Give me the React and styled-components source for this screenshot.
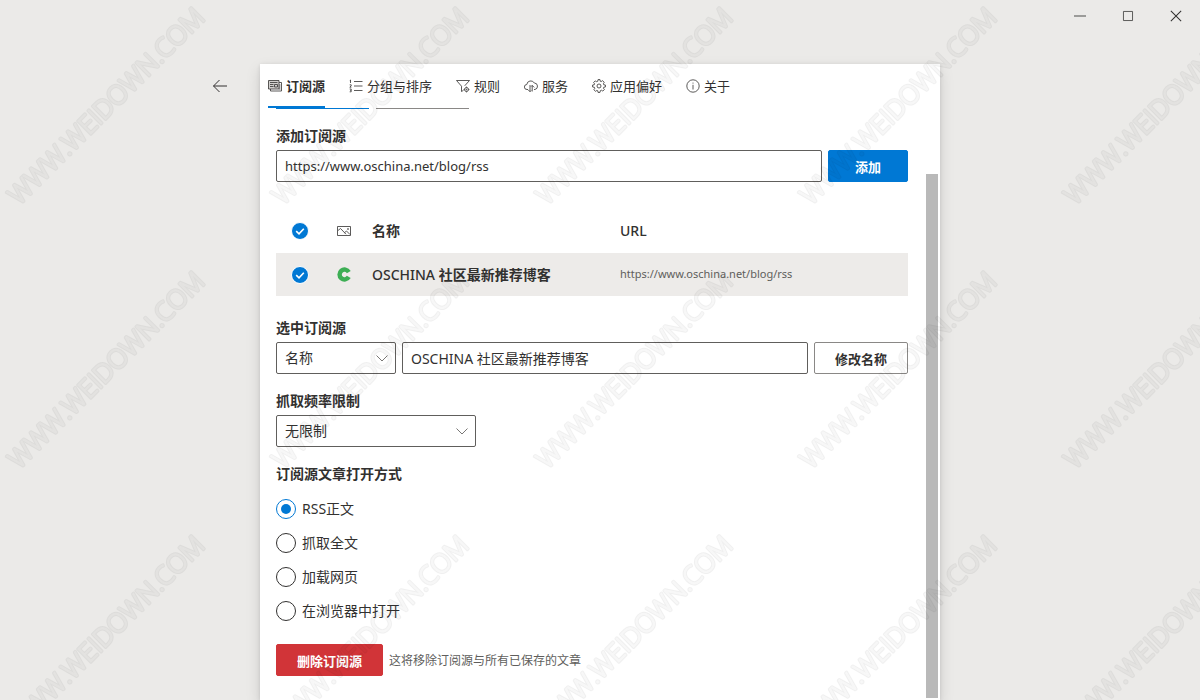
import React, { useState } from "react";
import styled, { createGlobalStyle } from "styled-components";

const GlobalStyle = createGlobalStyle`
  * {
    box-sizing: border-box;
  }

  body {
    margin: 0;
    background: #ebeae8;
    color: #323130;
  }

  body,
  button,
  input,
  select {
    font-family: "Noto Sans", "Noto Sans CJK SC", sans-serif;
    font-size: 14px;
  }
`;

const Page = styled.div`
  display: flex;
  flex-direction: column;
  min-height: 100vh;
`;

const TitleBar = styled.header`
  display: flex;
  justify-content: flex-end;
  height: 32px;
  margin-bottom: 32px;
`;

const WindowButton = styled.button`
  display: flex;
  justify-content: center;
  align-items: center;
  width: 48px;
  padding: 0;
  border: none;
  background: transparent;
  color: #323130;
`;

const Stage = styled.div`
  flex: 1;
  display: grid;
  grid-template-columns: 1fr minmax(0, 680px) 1fr;
`;

const BackButton = styled.button`
  display: flex;
  justify-content: center;
  align-items: center;
  justify-self: end;
  width: 40px;
  height: 44px;
  margin-right: 20px;
  padding: 0;
  border: none;
  background: transparent;
  color: #323130;
`;

const Panel = styled.main`
  display: flex;
  flex-direction: column;
  background: #fff;
  box-shadow: 0 6px 14px 0 rgba(0, 0, 0, 0.13), 0 1px 4px 0 rgba(0, 0, 0, 0.11);
`;

const Tabs = styled.nav`
  display: flex;
  gap: 24px;
  height: 44px;
  padding: 0 8px;
`;

const Tab = styled.button`
  display: flex;
  align-items: center;
  gap: 4px;
  padding: 0;
  border: none;
  border-top: 2px solid transparent;
  border-bottom: 2px solid ${(props) => (props.$active ? "#0078d4" : "transparent")};
  background: transparent;
  color: #323130;
  font-size: 13px;
  font-weight: ${(props) => (props.$active ? 700 : 400)};
  white-space: nowrap;
`;

const Caption = styled.span`
  padding-bottom: 2px;
`;

const Body = styled.div`
  flex: 1;
  display: flex;
`;

const Content = styled.div`
  flex: 1;
  min-width: 0;
  padding: 0 18px 16px 16px;
`;

const ScrollRail = styled.div`
  display: flex;
  width: 14px;
  padding: 66px 2px 2px 0;
`;

const ScrollThumb = styled.div`
  flex: 1;
  background: #b9b9b9;
`;

const EdgeRow = styled.div`
  display: flex;
  gap: 7px;
  margin-bottom: 13px;
`;

const ButtonEdge = styled.div`
  width: 93px;
  height: 1px;
  background: ${(props) => (props.$primary ? "#0078d4" : "#8a8886")};
`;

const Label = styled.label`
  display: block;
  height: 28px;
  line-height: 28px;
  font-weight: 700;
`;

const Legend = styled.legend`
  padding: 0;
  height: 28px;
  line-height: 28px;
  font-weight: 700;
`;

const FieldRow = styled.div`
  display: flex;
  align-items: center;
  gap: 6px;
  margin-bottom: ${(props) => props.$space || 0}px;
`;

const TextField = styled.input`
  flex: 1;
  min-width: 0;
  height: 32px;
  padding: 0 8px;
  border: 1px solid #605e5c;
  border-radius: 2px;
  background: #fff;
  color: #323130;
  font-size: ${(props) => (props.type === "url" ? 13 : 14)}px;
`;

const Button = styled.button`
  min-width: 80px;
  height: 32px;
  padding: 0 20px;
  border: 1px solid ${(props) => props.$color || "#8a8886"};
  border-radius: 2px;
  background: ${(props) => props.$color || "#fff"};
  color: ${(props) => (props.$color ? "#fff" : "#323130")};
  font-size: 13px;
  font-weight: 700;
  white-space: nowrap;
`;

const SelectBox = styled.div`
  display: grid;
  align-items: center;
  width: ${(props) => props.$width}px;

  > * {
    grid-area: 1 / 1;
  }

  svg {
    justify-self: end;
    margin-right: 7px;
    color: #797775;
    pointer-events: none;
  }
`;

const Select = styled.select`
  appearance: none;
  width: 100%;
  height: 32px;
  padding: 0 28px 2px 8px;
  border: 1px solid #605e5c;
  border-radius: 2px;
  background: #fff;
  color: #323130;
`;

const Table = styled.table`
  width: 100%;
  margin: 27px 0 18px;
  table-layout: fixed;
  border-collapse: collapse;
`;

const Th = styled.th`
  width: ${(props) => (props.$width ? `${props.$width}px` : "auto")};
  height: 44px;
  padding: ${(props) => (props.$icon ? "0" : "0 8px 2px")};
  text-align: left;
  font-weight: 500;
`;

const Td = styled.td`
  height: 43px;
  padding: ${(props) => (props.$icon ? "0" : "0 8px 2px")};
  background: #edebe9;
  color: ${(props) => (props.$muted ? "#605e5c" : "#323130")};
  font-size: ${(props) => (props.$muted ? 11 : 14)}px;
  font-weight: ${(props) => (props.$muted ? 400 : 500)};
`;

const Strong = styled.strong`
  font-weight: 700;
`;

const Center = styled.div`
  display: flex;
  justify-content: center;
`;

const CheckLabel = styled.label`
  display: grid;
  place-items: center;

  > * {
    grid-area: 1 / 1;
  }

  svg {
    pointer-events: none;
  }
`;

const CheckInput = styled.input`
  appearance: none;
  width: 18px;
  height: 18px;
  margin: 0;
  border: 1px solid ${(props) => (props.checked ? "#fff" : "#8a8886")};
  border-radius: 50%;
  background: ${(props) => (props.checked ? "#0078d4" : "#fff")};
`;

const RadioGroup = styled.fieldset`
  margin: 0 0 16px;
  padding: 0;
  border: none;
`;

const RadioList = styled.div`
  padding-top: 4px;
`;

const RadioLabel = styled.label`
  display: flex;
  align-items: center;
  gap: 6px;
  height: 34px;
`;

const RadioInput = styled.input`
  appearance: none;
  display: grid;
  place-items: center;
  width: 20px;
  height: 20px;
  margin: 0;
  border: 1px solid #323130;
  border-radius: 50%;

  &:checked {
    border-color: #0078d4;
  }

  &:checked::before {
    content: "";
    width: 10px;
    height: 10px;
    border-radius: 50%;
    background: #0078d4;
  }
`;

const Hint = styled.span`
  color: #605e5c;
  font-size: 12px;
`;

const WatermarkLayer = styled.svg`
  position: fixed;
  inset: 0;
  width: 100%;
  height: 100%;
  pointer-events: none;
  font-family: "Open Sans", sans-serif;
  font-size: 26px;
  font-weight: 300;
`;

const Icon = ({ size = 14, children }) => (
  <svg
    width={size}
    height={size}
    viewBox="0 0 14 14"
    fill="none"
    stroke="currentColor"
    strokeWidth="0.8"
    aria-hidden="true"
  >
    {children}
  </svg>
);

const SourceIcon = () => (
  <Icon>
    <path d="M.5 1.5H11V10H.5z" fill="#d2d0ce" />
    <path d="M2.5 10v2h11V3.5H11M2 3.5h7.5M2 5.5h3.5M2 7.5h3.5M6.5 5.5h3V8h-3zM11 6h1.5M11 8h1.5M11 10h1.5" />
  </Icon>
);

const GroupIcon = () => (
  <Icon>
    <path d="M5 2.5h8.5M5 7h8.5M5 11.5h8.5M1.5 1v3M.8 1.5l.7-.5M.7 5.8h1.5v1.1l-1.4 1.3h1.6M.7 10h1.5v1.4H1.2M2.2 11.4v1.4H.7" />
  </Icon>
);

const RuleIcon = () => (
  <Icon>
    <path d="M.5 1.5h13L8.7 6.8M.5 1.5l5 5.7v5.3l2-1.2" />
    <circle cx="10.5" cy="10.5" r="2" />
    <circle cx="10.5" cy="10.5" r="0.5" />
    <path d="M10.5 7.6v.9M10.5 12.5v.9M7.6 10.5h.9M12.5 10.5h.9" />
  </Icon>
);

const ServiceIcon = () => (
  <Icon>
    <path d="M4 10.5H3a2.5 2.5 0 0 1-.2-5A4 4 0 0 1 10.3 4a3.3 3.3 0 0 1 .7 6.5h-1" />
    <path d="M6 6v6.5M4 10.7l2 2 1.2-1.2M8.2 12.5V6.5M7 7.6l1.2-1.2 2 2" />
  </Icon>
);

const SettingsIcon = () => (
  <Icon>
    <path d="M5.8 2.2 6 .6h2l.2 1.6 1 .4L10.5 1.6 12.2 3.3 11.4 4.8l.4 1L13.4 6v2l-1.6.2-.4 1 1 1.3-1.6 1.6-1.4-.9-1 .4L8 13.4H6l-.2-1.6-1-.4-1.3 1L1.9 10.7l.9-1.4-.4-1L.6 8V6l1.6-.2.4-1-1-1.3L3.2 1.9l1.5.8z" />
    <circle cx="7" cy="7" r="2" />
  </Icon>
);

const AboutIcon = () => (
  <Icon>
    <circle cx="7" cy="7" r="6.2" />
    <path d="M7 5.8v4.7M7 3.6v1" />
  </Icon>
);

const BackIcon = () => (
  <Icon>
    <path d="M.5 7h13.5M6.5 1 .5 7l6 6" strokeWidth="1" />
  </Icon>
);

const Chevron = () => (
  <Icon>
    <path d="M1.5 4.5 7 10l5.5-5.5" strokeWidth="1" />
  </Icon>
);

const PictureIcon = () => (
  <Icon>
    <path d="M.5 2.5h13v9H.5zM1 6.5l2.5-2L9 10.2M7.5 8.7l2-1.7 3.5 3.5" />
    <circle cx="11" cy="5" r="0.5" />
  </Icon>
);

const SiteIcon = () => (
  <svg width="15" height="15" viewBox="0 0 14 14" aria-hidden="true">
    <path
      d="M11 4.7A4.6 4.6 0 1 0 11 9.3"
      fill="none"
      stroke="#3dae54"
      strokeWidth="4.2"
    />
  </svg>
);

const tabs = [
  { name: "订阅源", icon: SourceIcon },
  { name: "分组与排序", icon: GroupIcon },
  { name: "规则", icon: RuleIcon },
  { name: "服务", icon: ServiceIcon },
  { name: "应用偏好", icon: SettingsIcon },
  { name: "关于", icon: AboutIcon },
];

const openModes = ["RSS正文", "抓取全文", "加载网页", "在浏览器中打开"];

const Check = ({ label, checked, onChange }) => (
  <CheckLabel>
    <CheckInput
      type="checkbox"
      aria-label={label}
      checked={checked}
      onChange={onChange}
    />
    {checked && (
      <svg width="10" height="10" viewBox="0 0 10 10" aria-hidden="true">
        <path d="M1.2 5.2 4 7.8l4.8-5" fill="none" stroke="#fff" strokeWidth="1.6" />
      </svg>
    )}
  </CheckLabel>
);

// the mask thins out the middle of each stroke so the letters read as outlines
const Watermark = () => (
  <WatermarkLayer aria-hidden="true">
    <defs>
      <mask id="hollow" maskUnits="userSpaceOnUse" x="-20" y="-40" width="320" height="60">
        <rect x="-20" y="-40" width="320" height="60" fill="#fff" />
        <text fill="#777" stroke="#777" strokeWidth="1">
          WWW.WEIDOWN.COM
        </text>
      </mask>
      <pattern id="mark" width="264" height="264" patternUnits="userSpaceOnUse">
        <g transform="translate(19 206) rotate(-45)">
          <text
            mask="url(#hollow)"
            fill="#000"
            stroke="#000"
            strokeWidth="3"
            strokeLinejoin="round"
            opacity="0.06"
          >
            WWW.WEIDOWN.COM
          </text>
        </g>
      </pattern>
    </defs>
    <rect width="100%" height="100%" fill="url(#mark)" />
  </WatermarkLayer>
);

const App = () => {
  const [tab, setTab] = useState("订阅源");
  const [url, setUrl] = useState("https://www.oschina.net/blog/rss");
  const [name, setName] = useState("OSCHINA 社区最新推荐博客");
  const [selected, setSelected] = useState(true);
  const [mode, setMode] = useState(openModes[0]);

  const toggle = () => setSelected(!selected);

  return (
    <Page>
      <GlobalStyle />
      <TitleBar>
        <WindowButton aria-label="最小化">
          <Icon size={12}>
            <path d="M0 7h14" strokeWidth="1" />
          </Icon>
        </WindowButton>
        <WindowButton aria-label="最大化">
          <Icon size={12}>
            <path d="M1.7 1.7h10.6v10.6H1.7z" strokeWidth="0.9" />
          </Icon>
        </WindowButton>
        <WindowButton aria-label="关闭">
          <Icon size={12}>
            <path d="M1 1l12 12M13 1 1 13" strokeWidth="1.2" />
          </Icon>
        </WindowButton>
      </TitleBar>
      <Stage>
        <BackButton aria-label="返回">
          <BackIcon />
        </BackButton>
        <Panel>
          <Tabs>
            {tabs.map((item) => (
              <Tab
                key={item.name}
                $active={item.name === tab}
                onClick={() => setTab(item.name)}
              >
                <item.icon />
                <Caption>{item.name}</Caption>
              </Tab>
            ))}
          </Tabs>
          <Body>
            <Content>
              <EdgeRow>
                <ButtonEdge $primary />
                <ButtonEdge />
              </EdgeRow>

              <Label htmlFor="new-url">添加订阅源</Label>
              <FieldRow>
                <TextField
                  id="new-url"
                  type="url"
                  value={url}
                  onChange={(e) => setUrl(e.target.value)}
                />
                <Button $color="#0078d4">添加</Button>
              </FieldRow>

              <Table>
                <thead>
                  <tr>
                    <Th $icon $width={48}>
                      <Check label="全选" checked={selected} onChange={toggle} />
                    </Th>
                    <Th $icon $width={40}>
                      <Center>
                        <PictureIcon />
                      </Center>
                    </Th>
                    <Th $width={248}>
                      <Strong>名称</Strong>
                    </Th>
                    <Th>URL</Th>
                  </tr>
                </thead>
                <tbody>
                  <tr>
                    <Td $icon>
                      <Check label="选择" checked={selected} onChange={toggle} />
                    </Td>
                    <Td $icon>
                      <Center>
                        <SiteIcon />
                      </Center>
                    </Td>
                    <Td>
                      OSCHINA <Strong>社区最新推荐博客</Strong>
                    </Td>
                    <Td $muted>https://www.oschina.net/blog/rss</Td>
                  </tr>
                </tbody>
              </Table>

              <Label htmlFor="edit-field">选中订阅源</Label>
              <FieldRow $space={13}>
                <SelectBox $width={120}>
                  <Select id="edit-field">
                    <option>名称</option>
                    <option>图标</option>
                    <option>URL</option>
                  </Select>
                  <Chevron />
                </SelectBox>
                <TextField
                  type="text"
                  aria-label="名称"
                  value={name}
                  onChange={(e) => setName(e.target.value)}
                />
                <Button>修改名称</Button>
              </FieldRow>

              <Label htmlFor="frequency">抓取频率限制</Label>
              <FieldRow $space={13}>
                <SelectBox $width={200}>
                  <Select id="frequency">
                    <option>无限制</option>
                  </Select>
                  <Chevron />
                </SelectBox>
              </FieldRow>

              <RadioGroup>
                <Legend>订阅源文章打开方式</Legend>
                <RadioList>
                  {openModes.map((item) => (
                    <RadioLabel key={item}>
                      <RadioInput
                        type="radio"
                        name="open-mode"
                        checked={item === mode}
                        onChange={() => setMode(item)}
                      />
                      <Caption>{item}</Caption>
                    </RadioLabel>
                  ))}
                </RadioList>
              </RadioGroup>

              <FieldRow>
                <Button $color="#d13438">删除订阅源</Button>
                <Hint>这将移除订阅源与所有已保存的文章</Hint>
              </FieldRow>
            </Content>
            <ScrollRail>
              <ScrollThumb />
            </ScrollRail>
          </Body>
        </Panel>
      </Stage>
      <Watermark />
    </Page>
  );
};

export default App;
